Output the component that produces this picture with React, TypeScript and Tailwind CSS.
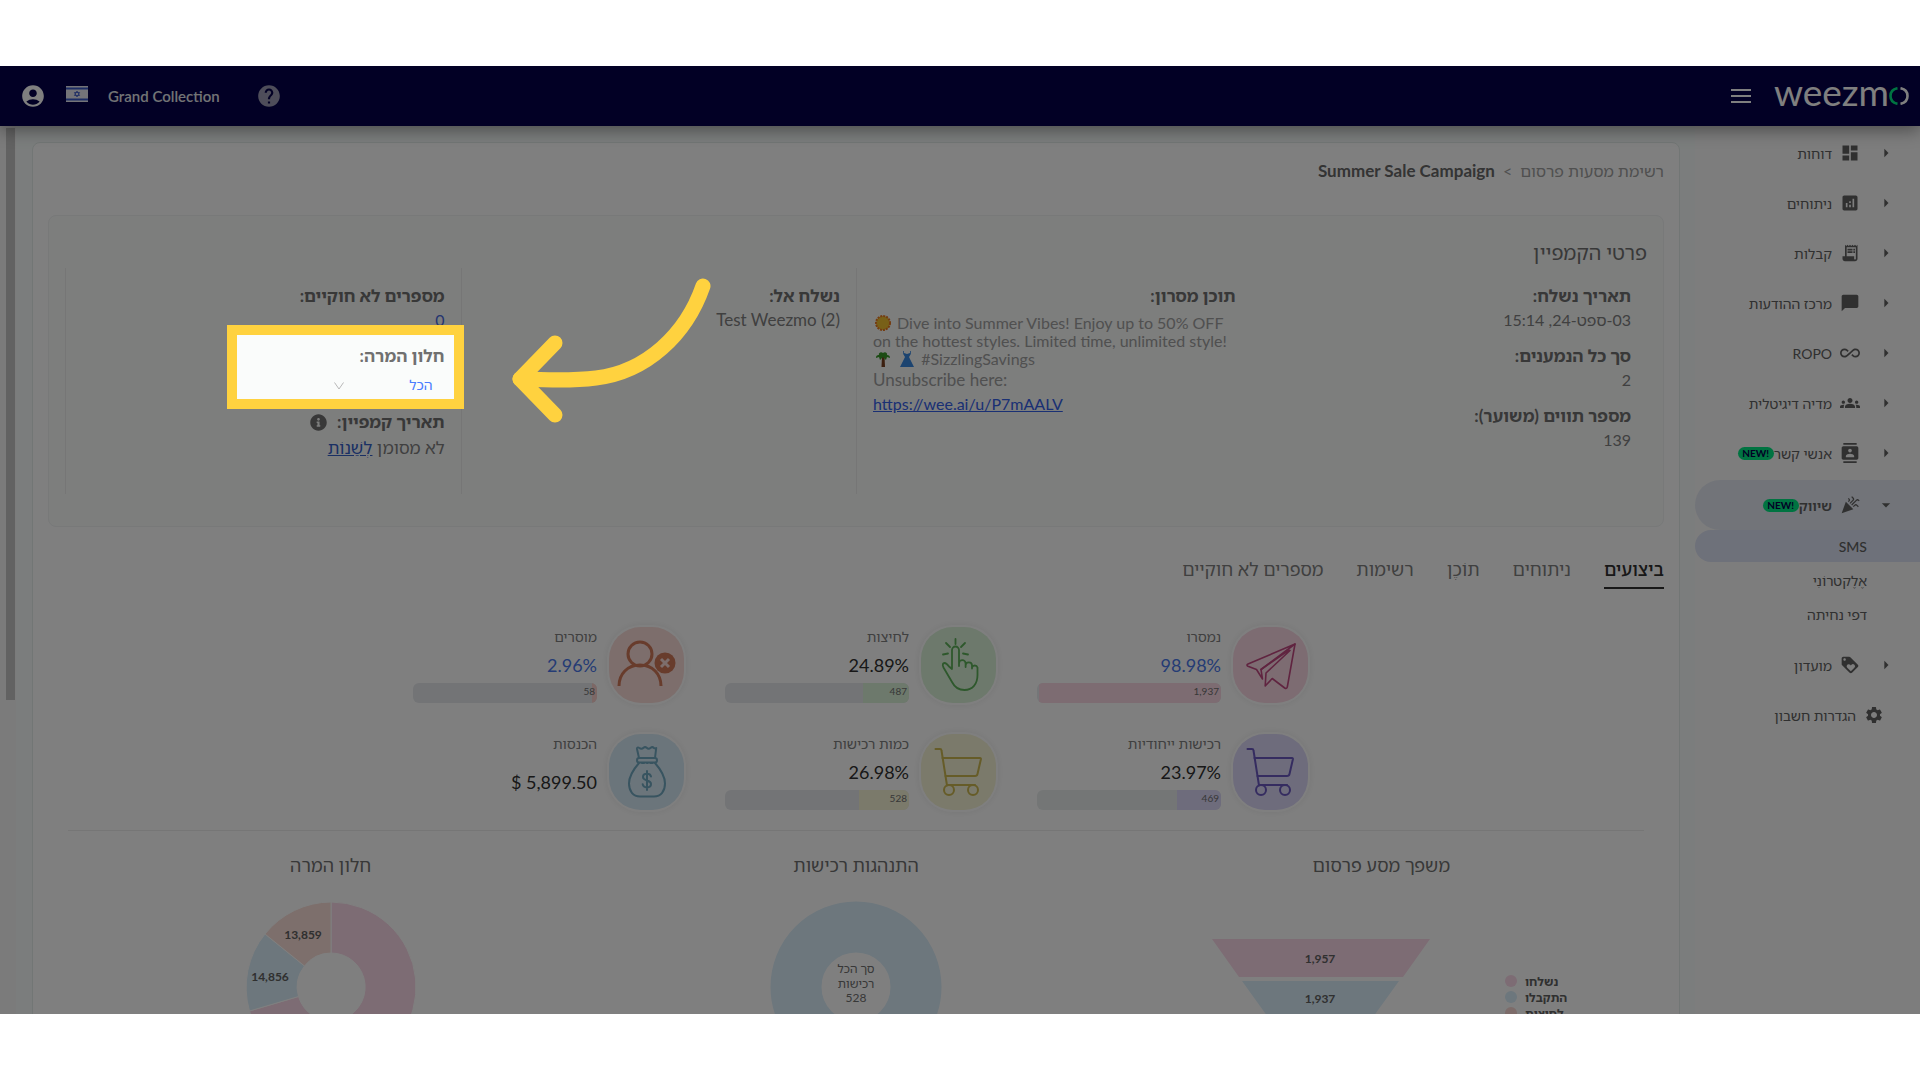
import type { ReactNode } from 'react';
import clsx from 'clsx';
import { FaInfoCircle } from 'react-icons/fa';
import {
    MdAccountCircle,
    MdAllInclusive,
    MdAnalytics,
    MdArrowDropDown,
    MdArrowRight,
    MdCelebration,
    MdChatBubble,
    MdContacts,
    MdDashboard,
    MdGroups,
    MdHelp,
    MdLoyalty,
    MdReceiptLong,
    MdSettings,
} from 'react-icons/md';

interface NavItem {
    label: string;
    icon: ReactNode;
    isNew?: boolean;
    active?: boolean;
}

interface Metric {
    label: string;
    value: string;
    count?: string;
    percent?: number;
    link?: boolean;
    tone: string;
    bar?: string;
    track?: string;
    icon: ReactNode;
}

const navItems: NavItem[] = [
    { label: 'דוחות', icon: <MdDashboard className="size-5" /> },
    { label: 'ניתוחים', icon: <MdAnalytics className="size-5" /> },
    { label: 'קבלות', icon: <MdReceiptLong className="size-5" /> },
    { label: 'מרכז ההודעות', icon: <MdChatBubble className="size-5" /> },
    { label: 'ROPO', icon: <MdAllInclusive className="size-5" /> },
    { label: 'מדיה דיגיטלית', icon: <MdGroups className="size-5" /> },
    { label: 'אנשי קשר', icon: <MdContacts className="size-5" />, isNew: true },
    { label: 'שיווק', icon: <MdCelebration className="size-5" />, isNew: true, active: true },
];

const subItems = ['SMS', 'אֶלֶקטרוֹנִי', 'דפי נחיתה'];

const tabs = ['ביצועים', 'ניתוחים', 'תוֹכֶן', 'רשימות', 'מספרים לא חוקיים'];

const CartIcon = () => (
    <svg viewBox="0 0 50 50" className="size-[50px]" fill="none" stroke="currentColor" strokeWidth="2" strokeLinecap="round" strokeLinejoin="round">
        <path d="M1.5 2h4.5c1 0 1.400.6 1.500 1.500L13 38.500" />
        <path d="M8.500 11h37.500c.7 0 1 .5.9 1.200l-3.400 14.800c-.3 1.400-1.100 2-2.500 2H11.500" />
        <path d="M13 38h28" />
        <circle cx="15" cy="43" r="5" />
        <circle cx="39" cy="43" r="5" />
    </svg>
);

const PlaneIcon = () => (
    <svg viewBox="0 0 50 50" className="size-[50px]" fill="none" stroke="currentColor" strokeWidth="1.600" strokeLinejoin="round" strokeLinecap="round">
        <path d="M49 4 2 24c-1.500.7-1.200 1.600 0 2.200l8.500 3.300 6 9.500-1.500-9.500L49 4Z" />
        <path d="M43 10 15 29.500M44 10.500 20 33l-.8 13 7-7.500 12.500 9.500c1.200.8 2.400.4 2.600-1L49 4" />
    </svg>
);

const TapIcon = () => (
    <svg viewBox="0 0 50 54" className="h-[54px] w-[50px]" fill="none" stroke="currentColor" strokeWidth="1.800" strokeLinecap="round" strokeLinejoin="round">
        <path d="M18 30V12a3.500 3.500 0 0 1 7 0V28v-2.500a3.300 3.300 0 0 1 6.600 0V29v-1.500a3.200 3.200 0 0 1 6.400 0v3-1a2.900 2.900 0 0 1 5.500 0V37c0 9-5 15-13 15-6.500 0-10-3-12.500-8L9.500 29.500C8 26.500 9 25 10.500 25c1.500 0 3 1.500 4.500 3.500L18 31" />
        <path d="M21.500 1v5M12 5l4 4M31 5l-4 4M9 16.500l5-1M29 15.500l5 1" />
    </svg>
);

const RemovedIcon = () => (
    <svg viewBox="0 0 60 50" className="h-[50px] w-[60px]" fill="none" stroke="currentColor" strokeWidth="3">
        <circle cx="23" cy="14" r="12" />
        <path d="M2 46c0-12 8.500-21 21-21s21 9 21 21" />
        <circle cx="48" cy="23" r="10.500" fill="currentColor" stroke="none" />
        <path d="m44 19 8 8m0-8-8 8" stroke="#fadcd8" />
    </svg>
);

const MoneyIcon = () => (
    <svg viewBox="0 0 40 52" className="h-[52px] w-10" fill="none" stroke="currentColor" strokeWidth="2" strokeLinecap="round" strokeLinejoin="round">
        <path d="M12 12 10 3c-.2-1.500 1-2 2-1.200 2 1.500 3 1.500 4.500 0 1.200-1 2-1 3.200 0 1.300 1.300 2.500 1.300 4 0 1.200-1 2-1 3 0 1.500 1 2 .7 2.500.2L28 12" />
        <rect x="10" y="12" width="20" height="4.500" rx="2.200" />
        <path d="M12 17C5 25 2 31 2 37.500 2 45 6 50.500 13 50.500h14c7 0 11-5.500 11-13C38 31 35 25 28 17M15 17h2M20 17h.5M23.500 17h2" />
        <path d="M24 30.500c-.5-2-2-2.700-4-2.700-2.500 0-4 1.200-4 3.200 0 4.500 8 2.500 8 7 0 2-1.600 3.400-4 3.400-2.300 0-4-1-4.300-3.200M20 25v19" />
    </svg>
);

const metrics: Metric[] = [
    { label: 'נמסרו', value: '98.98%', count: '1,937', percent: 99, link: true, tone: 'bg-[#fad8e4] text-[#c04880]', bar: 'bg-[#fad8e4]', track: 'bg-[#e8ecf0]', icon: <PlaneIcon /> },
    { label: 'לחיצות', value: '24.89%', count: '487', percent: 24.89, tone: 'bg-[#daf2d8] text-[#5cb058]', bar: 'bg-[#daf2d8]', track: 'bg-[#e6e8ec]', icon: <TapIcon /> },
    { label: 'מוסרים', value: '2.96%', count: '58', percent: 2.96, link: true, tone: 'bg-[#fadcd8] text-[#d07858]', bar: 'bg-[#fad0cc]', track: 'bg-[#e6e8ec]', icon: <RemovedIcon /> },
    { label: 'רכישות ייחודיות', value: '23.97%', count: '469', percent: 23.97, tone: 'bg-[#dcd8f8] text-[#6a58c0]', bar: 'bg-[#dcd8f8]', track: 'bg-[#e8ecec]', icon: <CartIcon /> },
    { label: 'כמות רכישות', value: '26.98%', count: '528', percent: 26.98, tone: 'bg-[#f6f4d6] text-[#ccb850]', bar: 'bg-[#f6f4d6]', track: 'bg-[#e6e8ec]', icon: <CartIcon /> },
    { label: 'הכנסות', value: '$ 5,899.50', tone: 'bg-[#d6eaf6] text-[#70a8c0]', icon: <MoneyIcon /> },
];

function NewBadge() {
    return (
        <span className="flex h-[13px] w-9 items-center justify-center rounded-full bg-[#00e682] font-[Lato] text-[10px] font-bold text-[#04004a]">
            <bdi dir="ltr">NEW!</bdi>
        </span>
    );
}

function Header() {
    return (
        <header className="relative z-10 flex h-[60px] items-center justify-between bg-[#04004a] px-[11px] text-white shadow-[0_4px_16px_rgba(0,0,0,0.4)]">
            <div className="flex items-center gap-[22px]">
                <a href="#" aria-label="weezmo" dir="ltr" className="flex items-center">
                    <span className="-mt-2 font-[Lato] text-[37px] leading-9 font-normal">weezm</span>
                    <svg viewBox="0 0 20 18" className="h-[18px] w-5" fill="none" strokeWidth="2.600">
                        <path d="M8.500 1.200C4 2 1.500 5 1.500 9s2.500 7 7 7.800" stroke="#00e682" />
                        <path d="M11.500 1.200c4.500.8 7 3.800 7 7.800s-2.500 7-7 7.800" stroke="currentColor" />
                    </svg>
                </a>
                <button type="button" aria-label="תפריט">
                    <svg viewBox="0 0 22 16" className="h-4 w-[22px]" stroke="currentColor" strokeWidth="2">
                        <path d="M1 2h20M1 8h20M1 14h20" />
                    </svg>
                </button>
            </div>
            <div className="flex items-center pl-[9px]">
                <button type="button" aria-label="עזרה" className="text-[#9c9ab4]">
                    <MdHelp className="size-[26px]" />
                </button>
                <span dir="ltr" className="mr-9 text-[15px] font-semibold text-gray-200">Grand Collection</span>
                <svg viewBox="0 0 22 16" className="mr-5 mb-1 h-4 w-[22px]">
                    <rect width="22" height="16" fill="#e8e8f0" />
                    <path d="M0 2.500h22M0 13.500h22" stroke="#3858c8" strokeWidth="2" />
                    <path d="m11 5 2.600 4.500H8.400ZM11 11 8.400 6.500h5.200Z" fill="none" stroke="#3858c8" strokeWidth=".8" />
                </svg>
                <button type="button" aria-label="חשבון" className="mr-5">
                    <MdAccountCircle className="size-[26px]" />
                </button>
            </div>
        </header>
    );
}

function Sidebar() {
    return (
        <nav className="w-[225px] shrink-0 bg-[#fafafa] pt-0.5 text-[14px] text-[#606060]">
            <ul>
                {navItems.map((item) => (
                    <li key={item.label}>
                        <a
                            href="#"
                            className={clsx(
                                'flex h-[50px] items-center pr-6',
                                item.active && 'mt-0.5 rounded-l-full bg-[#e4e9f2] font-semibold'
                            )}
                        >
                            {item.active ? <MdArrowDropDown className="size-5" /> : <MdArrowRight className="size-5" />}
                            <span className="mr-4">{item.icon}</span>
                            <span className="mr-2">{item.label}</span>
                            {item.isNew && <NewBadge />}
                        </a>
                    </li>
                ))}
            </ul>
            <ul className="mb-2.5 flex flex-col gap-0.5">
                {subItems.map((label, i) => (
                    <li key={label}>
                        <a
                            href="#"
                            className={clsx('flex h-8 items-center pr-[53px]', i === 0 && 'rounded-l-full bg-[#dce2f4] font-medium')}
                        >
                            {label}
                        </a>
                    </li>
                ))}
            </ul>
            <a href="#" className="flex h-[50px] items-center pr-6">
                <MdArrowRight className="size-5" />
                <MdLoyalty className="mr-4 size-5" />
                <span className="mr-2">מועדון</span>
            </a>
            <a href="#" className="flex h-[50px] items-center pr-9">
                <MdSettings className="size-5" />
                <span className="mr-2">הגדרות חשבון</span>
            </a>
        </nav>
    );
}

function Field({ label, children }: { label: string; children: ReactNode }) {
    return (
        <div>
            <dt className="text-[17px] font-bold text-[#707070]">{label}</dt>
            <dd>{children}</dd>
        </div>
    );
}

function ConversionWindow() {
    return (
        <div className="relative w-[200px]">
            <label htmlFor="conversion-window" className="block text-[17px] font-bold text-[#707070]">חלון המרה:</label>
            <div className="relative mt-1 h-[26px]">
                <select
                    id="conversion-window"
                    className="h-[26px] w-[120px] appearance-none bg-transparent pr-3 text-sm text-[#4a7cff]"
                >
                    <option>הכל</option>
                </select>
                <svg viewBox="0 0 10 8" className="pointer-events-none absolute top-2.5 right-[101px] h-2 w-2.5" fill="none" stroke="#b8b8b8">
                    <path d="m.5.5 4.500 6.500L9.500.5" />
                </svg>
            </div>

            {/* Spotlight: the shadow dims everything around the frame */}
            <div className="pointer-events-none absolute -top-[19px] -right-[19px] -bottom-[11px] -left-[18px] z-20 border-[10px] border-[#ffd23f] shadow-[0_0_0_3000px_rgba(0,0,0,0.5)]">
                <svg viewBox="0 0 200 150" className="absolute -top-[58px] left-[275px] h-[150px] w-[200px]" fill="none" stroke="#ffd23f" strokeWidth="15" strokeLinecap="round" strokeLinejoin="round">
                    <path d="M191 9C174 58 134 95 84 101 60 104 35 103 8 102" />
                    <path d="M43 66 8 102l35 36" />
                </svg>
            </div>
        </div>
    );
}

function CampaignDetails() {
    return (
        <section className="mt-8 rounded-lg border border-[#f0f2f2] bg-[#fafcfb] px-4 pt-6 pb-8">
            <h2 className="text-xl leading-6 text-[#707070]">פרטי הקמפיין</h2>
            <div className="mt-1 grid h-[226px] grid-cols-4 leading-6 text-[#808080]">
                <dl className="flex flex-col gap-3 px-4 pt-4">
                    <Field label="תאריך נשלח:">03-ספט-24, 15:14</Field>
                    <Field label="סך כל הנמענים:">2</Field>
                    <Field label="מספר תווים (משוער):">139</Field>
                </dl>
                <dl className="border-l border-[#ececec] px-4 pt-4">
                    <Field label="תוכן מסרון:">
                        <div dir="ltr" className="text-left whitespace-nowrap text-[#a0a0a0]">
                            <p className="mt-1.5 leading-[18px]">
                                <svg viewBox="0 0 16 16" className="mx-0.5 inline size-4 align-[-2px]">
                                    <circle cx="8" cy="8" r="7" fill="#f0c030" stroke="#e87820" strokeWidth="2" strokeDasharray="2 1" />
                                </svg>{' '}
                                Dive into Summer Vibes! Enjoy up to 50% OFF
                                <br />
                                on the hottest styles. Limited time, unlimited style!
                                <br />
                                <svg viewBox="0 0 16 16" className="mx-0.5 inline size-4 align-[-2px]">
                                    <path d="M7 5h2.500l.5 11H6.500Z" fill="#784020" />
                                    <path d="M1 7c0-3 2-3 3-3-1-2 2-4 4-2 2-2 5 0 4 2 2 0 3 1 3 3l-3-1-1 3-3-3-3 3-1-3Z" fill="#389828" />
                                </svg>{' '}
                                <svg viewBox="0 0 16 16" className="mx-0.5 inline size-4 align-[-2px]">
                                    <path d="M5 0v2l3 1 3-1V0h.8v3L10 6l5 10H1L6 6 4.200 3V0Z" fill="#3888e0" />
                                </svg>{' '}
                                #SizzlingSavings
                            </p>
                            <p className="text-[17px]">Unsubscribe here:</p>
                            <a href="#" className="text-[#3560e8] underline">https://wee.ai/u/P7mAALV</a>
                        </div>
                    </Field>
                </dl>
                <dl className="border-l border-[#ececec] px-4 pt-4">
                    <Field label="נשלח אל:">
                        <bdi dir="ltr" className="text-[17px]">Test Weezmo (2)</bdi>
                    </Field>
                </dl>
                <div className="flex flex-col gap-3 border-l border-[#ececec] px-4 pt-4">
                    <dl>
                        <Field label="מספרים לא חוקיים:">
                            <a href="#" className="text-[#4a6ce0]">0</a>
                        </Field>
                    </dl>
                    <ConversionWindow />
                    <div className="text-[17px]">
                        <p className="flex items-center gap-2.5 font-bold text-[#707070]">
                            תאריך קמפיין: <FaInfoCircle className="size-[17px]" />
                        </p>
                        <p className="mt-0.5">
                            לא מסומן <a href="#" className="text-[#3560c8] underline">לְשַׁנוֹת</a>
                        </p>
                    </div>
                </div>
            </div>
        </section>
    );
}

function MetricCard({ metric }: { metric: Metric }) {
    return (
        <div className="flex gap-3">
            <div className={clsx('flex h-[76px] w-[75px] shrink-0 items-center justify-center rounded-[32px] shadow-[0_0_0_2px_#ffffff,0_0_6px_3px_rgba(0,0,0,0.06)]', metric.tone)}>
                {metric.icon}
            </div>
            <div className="w-[184px]">
                <div className="h-5 text-sm text-[#808080]">{metric.label}</div>
                <div className={clsx('text-lg leading-7', metric.count ? 'mt-1' : 'mt-3.5', metric.link ? 'text-[#4a78ea]' : 'text-[#303030]')}>
                    <bdi dir="ltr">{metric.value}</bdi>
                </div>
                {metric.count && (
                    <div className={clsx('relative mt-1 h-5 overflow-hidden rounded-md', metric.track)}>
                        <div className={clsx('h-full', metric.bar)} style={{ width: `${metric.percent}%` }} />
                        <span className="absolute top-0 right-0.5 text-[10px] leading-4 text-[#707070]">{metric.count}</span>
                    </div>
                )}
            </div>
        </div>
    );
}

function FunnelChart() {
    return (
        <svg viewBox="-1 0 400 150" className="mt-[23px] h-[150px] w-[400px]" direction="ltr">
            <path d="M30 37h218l-27 38H57Z" fill="#fad8e8" />
            <path d="M60 79h157l-36 50H96Z" fill="#daeefa" />
            <g className="fill-[#606060] text-[12px] font-bold" textAnchor="middle">
                <text x="138" y="61">1,957</text>
                <text x="138" y="101">1,937</text>
            </g>
            <circle cx="329" cy="79" r="6" fill="#fad8e8" />
            <circle cx="329" cy="95" r="6" fill="#daeefa" />
            <circle cx="329" cy="111" r="6" fill="#fad8d4" />
            <g className="fill-[#606060] text-[12px] font-bold">
                <text x="343" y="84">נשלחו</text>
                <text x="343" y="100">התקבלו</text>
                <text x="343" y="116">לחיצות</text>
            </g>
        </svg>
    );
}

function PurchaseDonut() {
    return (
        <svg viewBox="0 0 172 172" className="mt-[22px] size-[172px]" direction="ltr">
            <circle cx="86" cy="86" r="60" fill="none" stroke="#daeefa" strokeWidth="51" />
            <g className="fill-[#707070] text-[12px]" textAnchor="middle">
                <text x="86" y="72">סך הכל</text>
                <text x="86" y="87">רכישות</text>
                <text x="86" y="101">528</text>
            </g>
        </svg>
    );
}

function ConversionDonut() {
    return (
        <svg viewBox="0 0 172 172" className="mt-[22px] size-[172px]" direction="ltr">
            <g stroke="#ffffff" strokeWidth="1">
                <path d="M86 1a85 85 0 1 1-81.500 109L53.500 95.500A34 34 0 1 0 86 52Z" fill="#fad8e8" />
                <path d="M4.500 110A85 85 0 0 1 20 33l39.500 32a34 34 0 0 0-6 30.500Z" fill="#daeefa" />
                <path d="M20 33A85 85 0 0 1 86 1v51a34 34 0 0 0-26.500 13Z" fill="#fadfd8" />
            </g>
            <g className="fill-[#606060] text-[12px] font-bold" textAnchor="middle">
                <text x="58" y="38">13,859</text>
                <text x="25" y="80">14,856</text>
            </g>
        </svg>
    );
}

function Chart({ title, children }: { title: string; children: ReactNode }) {
    return (
        <div className="flex flex-col items-center">
            <h3 className="text-lg leading-7 text-[#707070]">{title}</h3>
            {children}
        </div>
    );
}

export default function App() {
    return (
        <div className="h-screen bg-white py-[66px]">
            <div dir="rtl" className="relative isolate flex h-full flex-col overflow-hidden bg-[#f6fbfa] font-[Lato,'Noto_Sans_Hebrew','Noto_Sans','Open_Sans',sans-serif]">
                <Header />
                <div className="flex min-h-0 flex-1">
                    <Sidebar />
                    <main className="min-w-0 flex-1 pt-4 pr-[15px] pl-4">
                        <div className="rounded-lg border border-[#e4ecea] bg-white px-[15px] pt-4 pb-10">
                            <nav className="flex gap-2 leading-6 text-[#a0a0a0]">
                                <a href="#">רשימת מסעות פרסום</a>
                                <bdi dir="ltr">&lt;</bdi>
                                <bdi dir="ltr" className="text-[17px] font-bold text-[#686868]">Summer Sale Campaign</bdi>
                            </nav>

                            <CampaignDetails />

                            <div className="mt-7 flex gap-[33px] text-lg leading-7 text-[#808080]">
                                {tabs.map((tab, i) => (
                                    <button
                                        key={tab}
                                        type="button"
                                        className={clsx('border-b-2 pb-1', i === 0 ? 'border-[#303030] font-medium text-[#303030]' : 'border-transparent')}
                                    >
                                        {tab}
                                    </button>
                                ))}
                            </div>

                            <div className="mt-[38px] grid grid-cols-[repeat(3,280px)] justify-center gap-x-8 gap-y-[31px]">
                                {metrics.map((metric) => (
                                    <MetricCard key={metric.label} metric={metric} />
                                ))}
                            </div>

                            <div className="mx-5 mt-5 grid grid-cols-3 border-t border-[#ececec] pt-5">
                                <Chart title="משפך מסע פרסום"><FunnelChart /></Chart>
                                <Chart title="התנהגות רכישות"><PurchaseDonut /></Chart>
                                <Chart title="חלון המרה"><ConversionDonut /></Chart>
                            </div>
                        </div>
                    </main>
                    <div className="w-4 shrink-0 bg-[#f6f6f6] pt-0.5 pr-px pl-1.5">
                        <div className="h-[572px] bg-[#c4c4c4]" />
                    </div>
                </div>
            </div>
        </div>
    );
}
